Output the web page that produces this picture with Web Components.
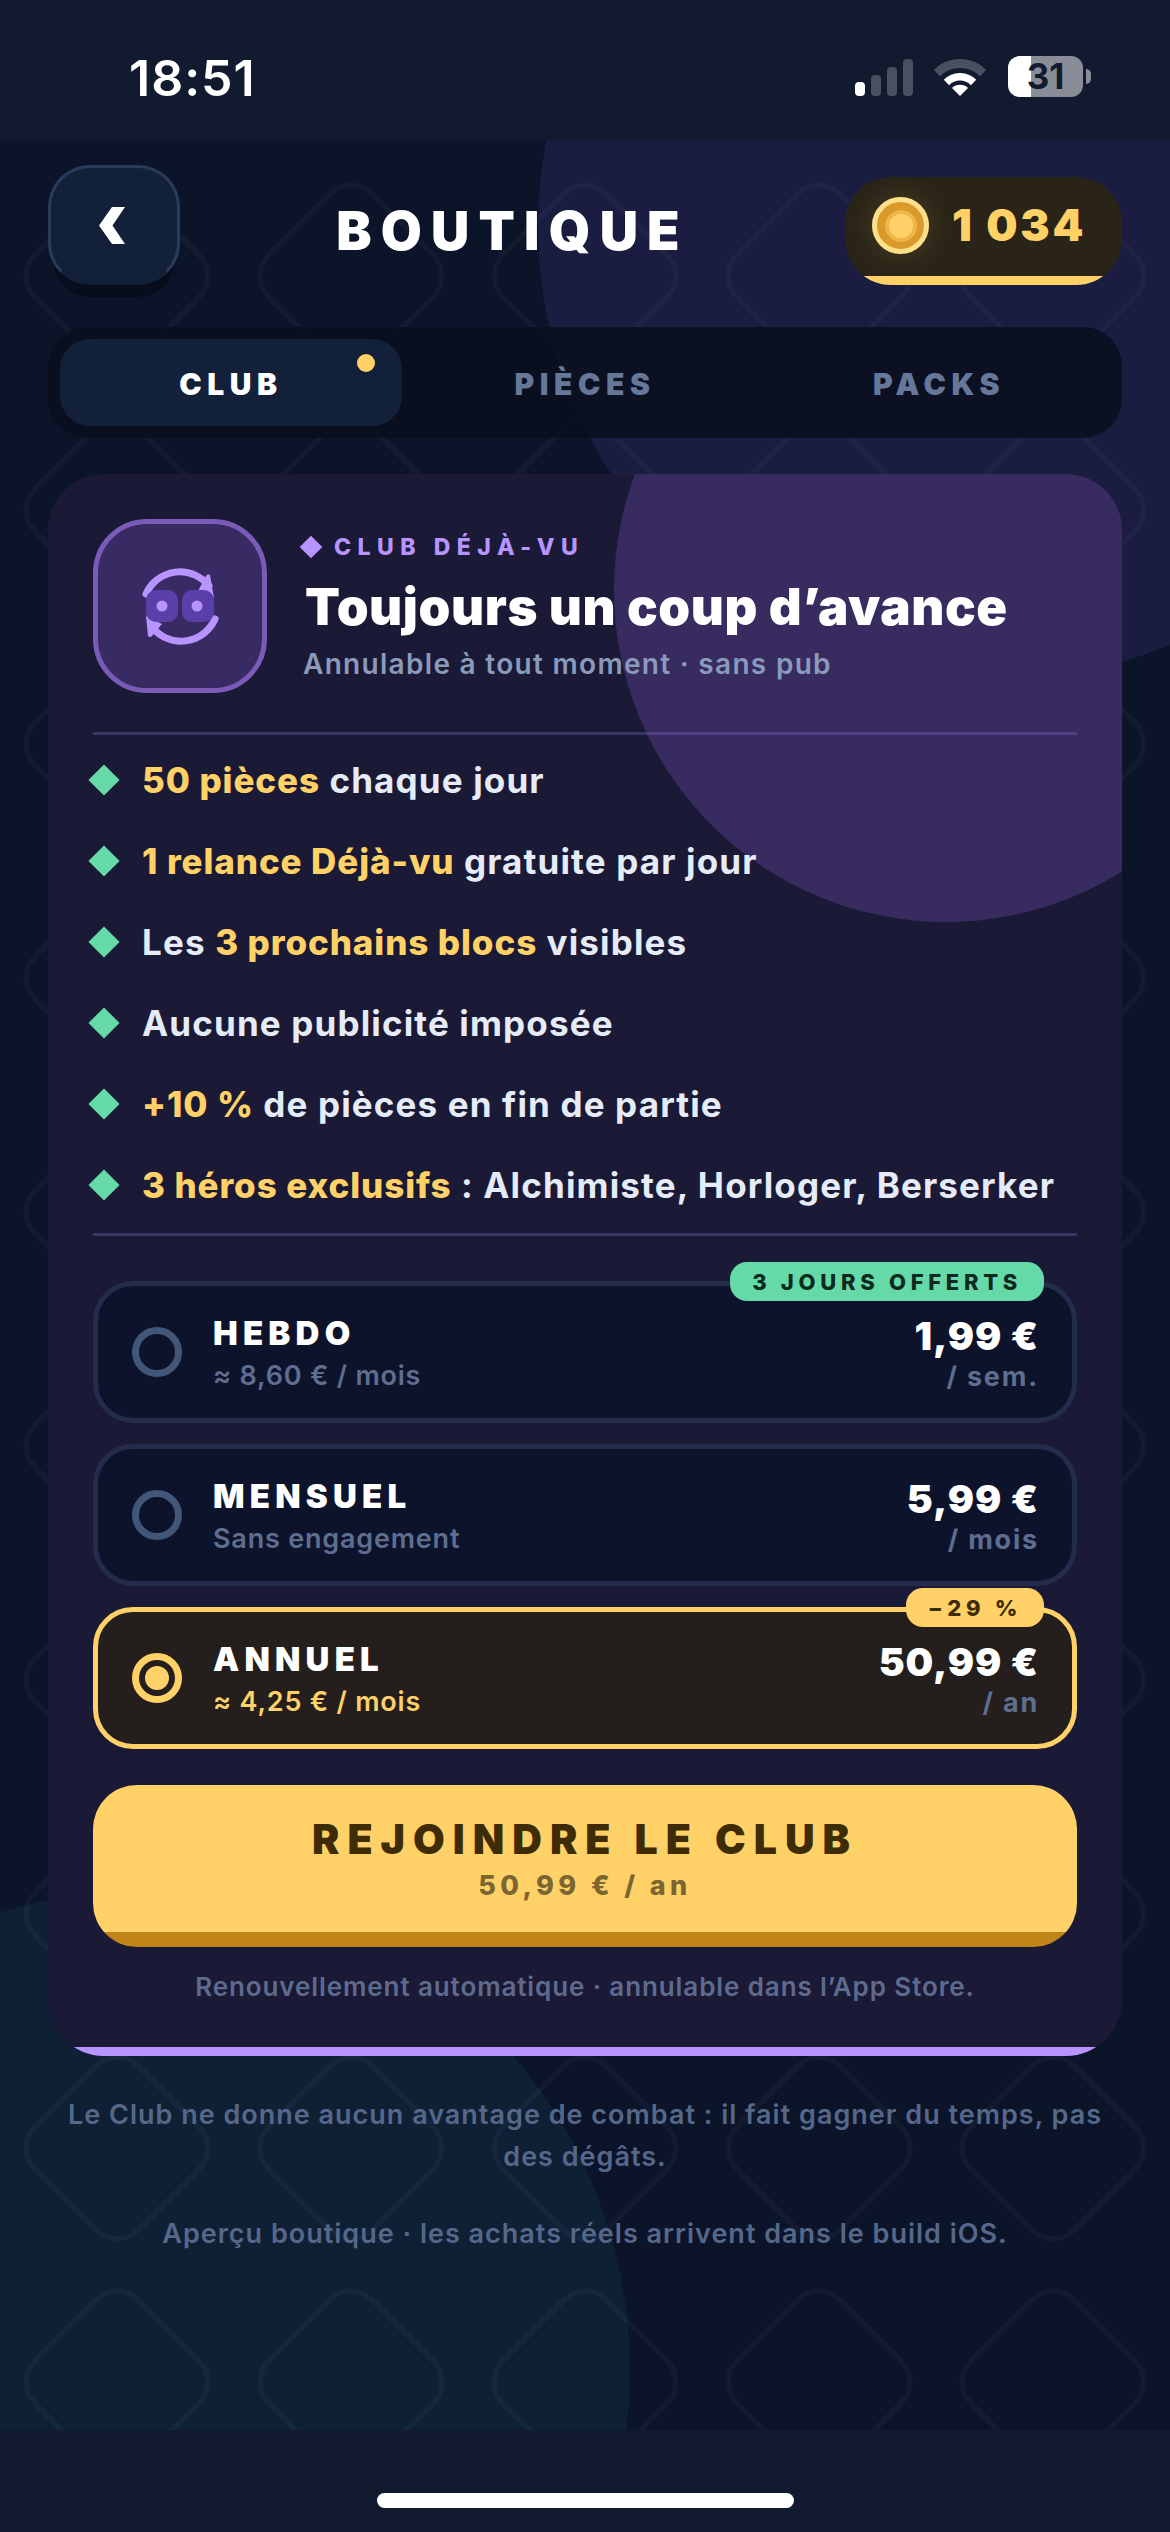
<!DOCTYPE html>
<html lang="fr">
<head>
<meta charset="utf-8">
<title>Boutique</title>
<style>
  html, body { margin: 0; padding: 0; background: #111a2e; }
  body { font-family: Inter, "Liberation Sans", sans-serif; color: #fff; }
</style>
</head>
<body>
<shop-screen>
  <status-bar slot="top" time="18:51" level="31"></status-bar>

  <shop-header title="BOUTIQUE" coins="1 034"></shop-header>

  <shop-tabs>
    <tab-item active dot>CLUB</tab-item>
    <tab-item>PIÈCES</tab-item>
    <tab-item>PACKS</tab-item>
  </shop-tabs>

  <club-card>
    <feature-row><b>50 pièces</b> chaque jour</feature-row>
    <feature-row><b>1 relance Déjà-vu</b> gratuite par jour</feature-row>
    <feature-row>Les <b>3 prochains blocs</b> visibles</feature-row>
    <feature-row>Aucune publicité imposée</feature-row>
    <feature-row><b>+10 %</b> de pièces en fin de partie</feature-row>
    <feature-row><b>3 héros exclusifs</b> : Alchimiste, Horloger, Berserker</feature-row>

    <plan-option slot="plans" name="HEBDO" sub="≈ 8,60 € / mois" price="1,99 €" per="/ sem." badge="3 JOURS OFFERTS" badge-kind="green"></plan-option>
    <plan-option slot="plans" name="MENSUEL" sub="Sans engagement" price="5,99 €" per="/ mois"></plan-option>
    <plan-option slot="plans" name="ANNUEL" sub="≈ 4,25 € / mois" price="50,99 €" per="/ an" badge="−29 %" selected></plan-option>

    <cta-button slot="cta" sub="50,99 € / an">REJOINDRE LE CLUB</cta-button>
    <span slot="note">Renouvellement automatique · annulable dans l’App Store.</span>
  </club-card>

  <shop-footer>
    <p>Le Club ne donne aucun avantage de combat : il fait gagner du temps, pas des dégâts.</p>
    <p>Aperçu boutique · les achats réels arrivent dans le build iOS.</p>
  </shop-footer>
</shop-screen>

<script>
// Page frame: status bar, decorated main area, home indicator strip
class ShopScreen extends HTMLElement {
  constructor() {
    super();
    this.attachShadow({ mode: 'open' });
  }

  connectedCallback() {
    this.shadowRoot.innerHTML = `
      <style>
        :host { display: flex; flex-direction: column; width: 1170px; height: 2532px; overflow: hidden; background: #111a2e; }
        main { position: relative; flex: 1; min-height: 0; background: #0c1429; overflow: hidden; }
        .decor { position: absolute; left: 0; top: 0; }
        .content { position: relative; display: flex; flex-direction: column; padding: 24px 48px 0; }
        .home { height: 102px; display: flex; justify-content: center; flex: none; }
        .home i { display: block; width: 417px; height: 15px; margin-top: 63px; border-radius: 8px; background: #fff; }
      </style>
      <slot name="top"></slot>
      <main>
        <svg class="decor" width="1170" height="2289" viewBox="0 141 1170 2289" aria-hidden="true">
          <defs>
            <pattern id="tile" patternUnits="userSpaceOnUse" x="0" y="159" width="234" height="234">
              <rect x="44" y="44" width="146" height="146" rx="30" transform="rotate(45 117 117)" fill="none" stroke="#8fc0e6" stroke-opacity="0.04" stroke-width="5"/>
            </pattern>
          </defs>
          <circle cx="992" cy="227" r="454" fill="#1a1c40"/>
          <circle cx="149" cy="2370" r="481" fill="#0f2035"/>
          <rect x="0" y="141" width="1170" height="2289" fill="url(#tile)"/>
        </svg>
        <div class="content"><slot></slot></div>
      </main>
      <div class="home"><i></i></div>
    `;
  }
}

class StatusBar extends HTMLElement {
  constructor() {
    super();
    this.attachShadow({ mode: 'open' });
  }

  connectedCallback() {
    const level = Number(this.getAttribute('level') || 100);
    this.shadowRoot.innerHTML = `
      <style>
        :host { display: flex; flex: none; height: 141px; box-sizing: border-box; padding: 56px 79px 0 129px; justify-content: space-between; align-items: flex-start; background: #111a2e; }
        .time { font-size: 50px; line-height: 44px; font-weight: 600; letter-spacing: 1px; color: #fff; }
        .right { display: flex; align-items: flex-start; }
        .signal { display: flex; align-items: flex-end; gap: 6px; height: 37px; margin-top: 3px; }
        .signal i { display: block; width: 10px; border-radius: 4px; background: rgba(255,255,255,.24); }
        .signal i:first-child { background: #fff; }
        .wifi { display: block; margin: 3px 0 0 21px; }
        .battery { position: relative; width: 75px; height: 41px; margin-left: 22px; border-radius: 12px; overflow: hidden; background: rgba(255,255,255,.5); }
        .fill { position: absolute; left: 0; top: 0; bottom: 0; background: #fff; }
        .level { position: relative; display: block; text-align: center; font-size: 35px; line-height: 41px; font-weight: 700; color: #111a2e; }
        .nub { width: 5px; height: 15px; margin: 13px 0 0 3px; border-radius: 0 5px 5px 0; background: rgba(255,255,255,.5); }
      </style>
      <span class="time">${this.getAttribute('time')}</span>
      <div class="right">
        <div class="signal">
          <i style="height:14px"></i><i style="height:21px"></i><i style="height:29px"></i><i style="height:37px"></i>
        </div>
        <svg class="wifi" width="52" height="37" viewBox="0 0 52 37" aria-hidden="true">
          <path d="M3 14 A32.5 32.5 0 0 1 49 14" fill="none" stroke="#fff" stroke-opacity=".24" stroke-width="9"/>
          <path d="M12.5 23.5 A19 19 0 0 1 39.5 23.5" fill="none" stroke="#fff" stroke-width="7.5"/>
          <path d="M26 37 L18 29 A11.3 11.3 0 0 1 34 29 Z" fill="#fff"/>
        </svg>
        <div class="battery">
          <div class="fill" style="width:${level}%"></div>
          <span class="level">${level}</span>
        </div>
        <div class="nub"></div>
      </div>
    `;
  }
}

class ShopHeader extends HTMLElement {
  constructor() {
    super();
    this.attachShadow({ mode: 'open' });
  }

  connectedCallback() {
    this.shadowRoot.innerHTML = `
      <style>
        :host { display: grid; grid-template-columns: 132px 1fr 277px; height: 132px; margin-bottom: 30px; }
        .back { box-sizing: border-box; width: 132px; height: 120px; display: flex; align-items: center; justify-content: center; border: 3px solid #2a3c5c; border-bottom-color: #13203a; border-radius: 42px; background: #13203a; box-shadow: 0 18px 0 -6px #070d1a; }
        .back svg { margin-right: 4px; }
        h1 { margin: 0; padding-top: 41px; text-align: center; font-size: 53px; line-height: 50px; font-weight: 900; letter-spacing: 9.2px; color: #fff; }
        .coins { box-sizing: border-box; margin-top: 12px; height: 108px; display: flex; align-items: flex-start; gap: 23px; padding: 20px 0 0 27px; border-radius: 46px; background: linear-gradient(#2a2418 calc(100% - 9px), #ffd166 0); }
        .coin { box-sizing: border-box; flex: none; width: 57px; height: 57px; display: flex; align-items: center; justify-content: center; border: 5px solid #ffe08a; border-radius: 50%; background: #d99a2b; box-shadow: 0 0 30px rgba(255,209,102,.16); }
        .coin i { display: block; width: 24px; height: 24px; border-radius: 50%; background: #ffd166; box-shadow: 0 0 0 4px #eeb54a; }
        .num { font-size: 44px; line-height: 57px; font-weight: 900; letter-spacing: 2.8px; color: #ffd166; }
      </style>
      <div class="back">
        <svg width="26" height="37" viewBox="0 0 26 37" aria-hidden="true"><path d="M26 0 L13 0 L0 18.5 L13 37 L26 37 L13.5 18.5 Z" fill="#fff"/></svg>
      </div>
      <h1>${this.getAttribute('title')}</h1>
      <div class="coins">
        <div class="coin"><i></i></div>
        <span class="num">${this.getAttribute('coins')}</span>
      </div>
    `;
  }
}

class ShopTabs extends HTMLElement {
  constructor() {
    super();
    this.attachShadow({ mode: 'open' });
    this.shadowRoot.innerHTML = `
      <style>
        :host { display: grid; grid-template-columns: repeat(3, 1fr); gap: 12px; height: 111px; box-sizing: border-box; padding: 12px; margin-bottom: 36px; border-radius: 39px; background: rgba(9,15,30,.86); }
      </style>
      <slot></slot>
    `;
  }
}

class TabItem extends HTMLElement {
  constructor() {
    super();
    this.attachShadow({ mode: 'open' });
    this.shadowRoot.innerHTML = `
      <style>
        :host { position: relative; display: flex; align-items: center; justify-content: center; padding-top: 3px; border-radius: 30px; font-size: 30px; font-weight: 900; letter-spacing: 5.6px; color: #66789a; }
        :host([active]) { background: #13203a; color: #fff; }
        .dot { display: none; position: absolute; top: 15px; right: 27px; width: 18px; height: 18px; border-radius: 50%; background: #ffd166; }
        :host([dot]) .dot { display: block; }
      </style>
      <slot></slot>
      <span class="dot"></span>
    `;
  }
}

class ClubCard extends HTMLElement {
  constructor() {
    super();
    this.attachShadow({ mode: 'open' });
    this.shadowRoot.innerHTML = `
      <style>
        :host { position: relative; display: block; box-sizing: border-box; height: 1582px; padding: 45px 45px 0; border-radius: 56px; overflow: hidden; background: linear-gradient(#1a1a36 calc(100% - 9px), #b794ff 0); }
        .blob { position: absolute; left: 566px; top: -216px; width: 664px; height: 664px; border-radius: 50%; background: #372b5f; }
        .inner { position: relative; display: flex; flex-direction: column; }
        .head { display: flex; gap: 36px; align-items: flex-start; height: 174px; }
        .badge { box-sizing: border-box; flex: none; width: 174px; height: 174px; border: 5px solid #7a5cb8; border-radius: 54px; background: #382a62; display: flex; align-items: center; justify-content: center; }
        .eyebrow { display: flex; align-items: center; gap: 15px; height: 24px; margin-top: 16px; font-size: 23px; font-weight: 800; letter-spacing: 6.5px; color: #b794ff; }
        .eyebrow i { display: block; width: 16px; height: 16px; background: #b794ff; transform: rotate(45deg); }
        h2 { margin: 17px 0 0 2px; font-size: 51px; line-height: 62px; font-weight: 900; letter-spacing: .6px; color: #fff; white-space: nowrap; }
        .sub { margin-top: 8px; font-size: 28px; line-height: 36px; font-weight: 600; letter-spacing: 1.3px; color: #8a9abb; white-space: nowrap; }
        .rule { height: 3px; background: rgba(140,110,220,.3); }
        .rule.a { margin-top: 39px; }
        .features { display: flex; flex-direction: column; gap: 33px; margin: 21px 0 24px; }
        .plans { display: flex; flex-direction: column; gap: 21px; margin-top: 45px; }
        .cta { margin-top: 36px; }
        .note { margin-top: 23px; text-align: center; font-size: 26px; line-height: 34px; font-weight: 600; letter-spacing: .9px; color: #5e6b8e; }
      </style>
      <div class="blob"></div>
      <div class="inner">
        <div class="head">
          <div class="badge">
            <svg width="80" height="80" viewBox="140 566 80 80" aria-hidden="true">
              <g fill="none" stroke="#b794ff" stroke-width="7" stroke-linecap="round">
                <path d="M146 594 A37 37 0 0 1 209 586"/>
                <path d="M215 619 A37 37 0 0 1 152 627"/>
              </g>
              <path d="M206 576 Q208 573 210 575 L214 598 L198 591 Z" fill="#b794ff"/>
              <path d="M146 616 L162 624 L152 636 Q150 638 148 636 Z" fill="#b794ff"/>
              <rect x="146" y="590" width="32" height="32" rx="10" fill="#5a3fa8"/>
              <rect x="182" y="590" width="32" height="32" rx="10" fill="#5a3fa8"/>
              <circle cx="162" cy="606" r="5.5" fill="#b794ff"/>
              <circle cx="197" cy="606" r="5.5" fill="#b794ff"/>
            </svg>
          </div>
          <div>
            <div class="eyebrow"><i></i><span>CLUB DÉJÀ-VU</span></div>
            <h2>Toujours un coup d’avance</h2>
            <div class="sub">Annulable à tout moment · sans pub</div>
          </div>
        </div>
        <div class="rule a"></div>
        <div class="features"><slot></slot></div>
        <div class="rule"></div>
        <div class="plans"><slot name="plans"></slot></div>
        <div class="cta"><slot name="cta"></slot></div>
        <div class="note"><slot name="note"></slot></div>
      </div>
    `;
  }
}

class FeatureRow extends HTMLElement {
  constructor() {
    super();
    this.attachShadow({ mode: 'open' });
    this.shadowRoot.innerHTML = `
      <style>
        :host { display: flex; align-items: center; gap: 27px; height: 48px; font-size: 35px; font-weight: 700; letter-spacing: 1.15px; color: #e6ebf8; white-space: nowrap; }
        i { display: block; flex: none; width: 22px; height: 22px; background: #66d9a9; transform: rotate(45deg); }
        ::slotted(b) { font-weight: 800; letter-spacing: .9px; color: #ffd166; }
      </style>
      <i></i>
      <span><slot></slot></span>
    `;
  }
}

class PlanOption extends HTMLElement {
  constructor() {
    super();
    this.attachShadow({ mode: 'open' });
  }

  connectedCallback() {
    const badge = this.getAttribute('badge');
    this.shadowRoot.innerHTML = `
      <style>
        :host { position: relative; display: flex; align-items: center; box-sizing: border-box; height: 142px; padding: 3px 33px 0 34px; border: 5px solid #242c4c; border-radius: 40px; background: #0e132c; }
        :host([selected]) { border-color: #ffd166; background: #241f1c; }
        .radio { box-sizing: border-box; flex: none; width: 50px; height: 50px; margin-top: -3px; border: 7px solid #41577a; border-radius: 50%; display: flex; align-items: center; justify-content: center; }
        :host([selected]) .radio { border-color: #ffd166; }
        :host([selected]) .radio::after { content: ""; width: 24px; height: 24px; border-radius: 50%; background: #ffd166; }
        .info { flex: 1; margin-left: 31px; }
        .name { font-size: 33px; line-height: 38px; font-weight: 900; letter-spacing: 5.2px; color: #fff; }
        .sub { margin-top: 6px; font-size: 27px; line-height: 36px; font-weight: 600; letter-spacing: .8px; color: #5e6e90; }
        :host([selected]) .sub { color: #ffd166; }
        .right { text-align: right; }
        .price { font-size: 39px; line-height: 42px; font-weight: 900; letter-spacing: .9px; color: #fff; }
        .per { margin-top: 4px; font-size: 27px; line-height: 32px; font-weight: 700; letter-spacing: 1.8px; color: #5e6e90; }
        .tag { position: absolute; top: -24px; right: 28px; height: 39px; box-sizing: border-box; padding: 0 22px; display: flex; align-items: center; border-radius: 17px; font-size: 22px; font-weight: 800; letter-spacing: 4.7px; white-space: nowrap; background: #ffd166; color: #3d2c05; }
        .tag.green { background: #66d9a9; color: #0d2a20; }
      </style>
      <div class="radio"></div>
      <div class="info">
        <div class="name">${this.getAttribute('name')}</div>
        <div class="sub">${this.getAttribute('sub')}</div>
      </div>
      <div class="right">
        <div class="price">${this.getAttribute('price')}</div>
        <div class="per">${this.getAttribute('per')}</div>
      </div>
      ${badge ? `<div class="tag ${this.getAttribute('badge-kind') || ''}">${badge}</div>` : ''}
    `;
  }
}

class CtaButton extends HTMLElement {
  constructor() {
    super();
    this.attachShadow({ mode: 'open' });
  }

  connectedCallback() {
    this.shadowRoot.innerHTML = `
      <style>
        :host { display: flex; flex-direction: column; align-items: center; box-sizing: border-box; height: 162px; padding-top: 29px; border-radius: 44px; background: linear-gradient(#ffd166 calc(100% - 15px), #c08419 0); }
        .label { font-size: 41px; line-height: 50px; font-weight: 900; letter-spacing: 8px; color: #3d2c05; }
        .sub { margin-top: 5px; font-size: 27px; line-height: 34px; font-weight: 800; letter-spacing: 4.4px; color: #7b6530; }
      </style>
      <div class="label"><slot></slot></div>
      <div class="sub">${this.getAttribute('sub')}</div>
    `;
  }
}

class ShopFooter extends HTMLElement {
  constructor() {
    super();
    this.attachShadow({ mode: 'open' });
    this.shadowRoot.innerHTML = `
      <style>
        :host { display: flex; flex-direction: column; gap: 35px; margin-top: 38px; text-align: center; font-size: 27px; line-height: 42px; font-weight: 600; letter-spacing: 1px; color: #56688a; }
        ::slotted(p) { margin: 0; }
      </style>
      <slot></slot>
    `;
  }
}

customElements.define('shop-screen', ShopScreen);
customElements.define('status-bar', StatusBar);
customElements.define('shop-header', ShopHeader);
customElements.define('shop-tabs', ShopTabs);
customElements.define('tab-item', TabItem);
customElements.define('club-card', ClubCard);
customElements.define('feature-row', FeatureRow);
customElements.define('plan-option', PlanOption);
customElements.define('cta-button', CtaButton);
customElements.define('shop-footer', ShopFooter);
</script>
</body>
</html>
